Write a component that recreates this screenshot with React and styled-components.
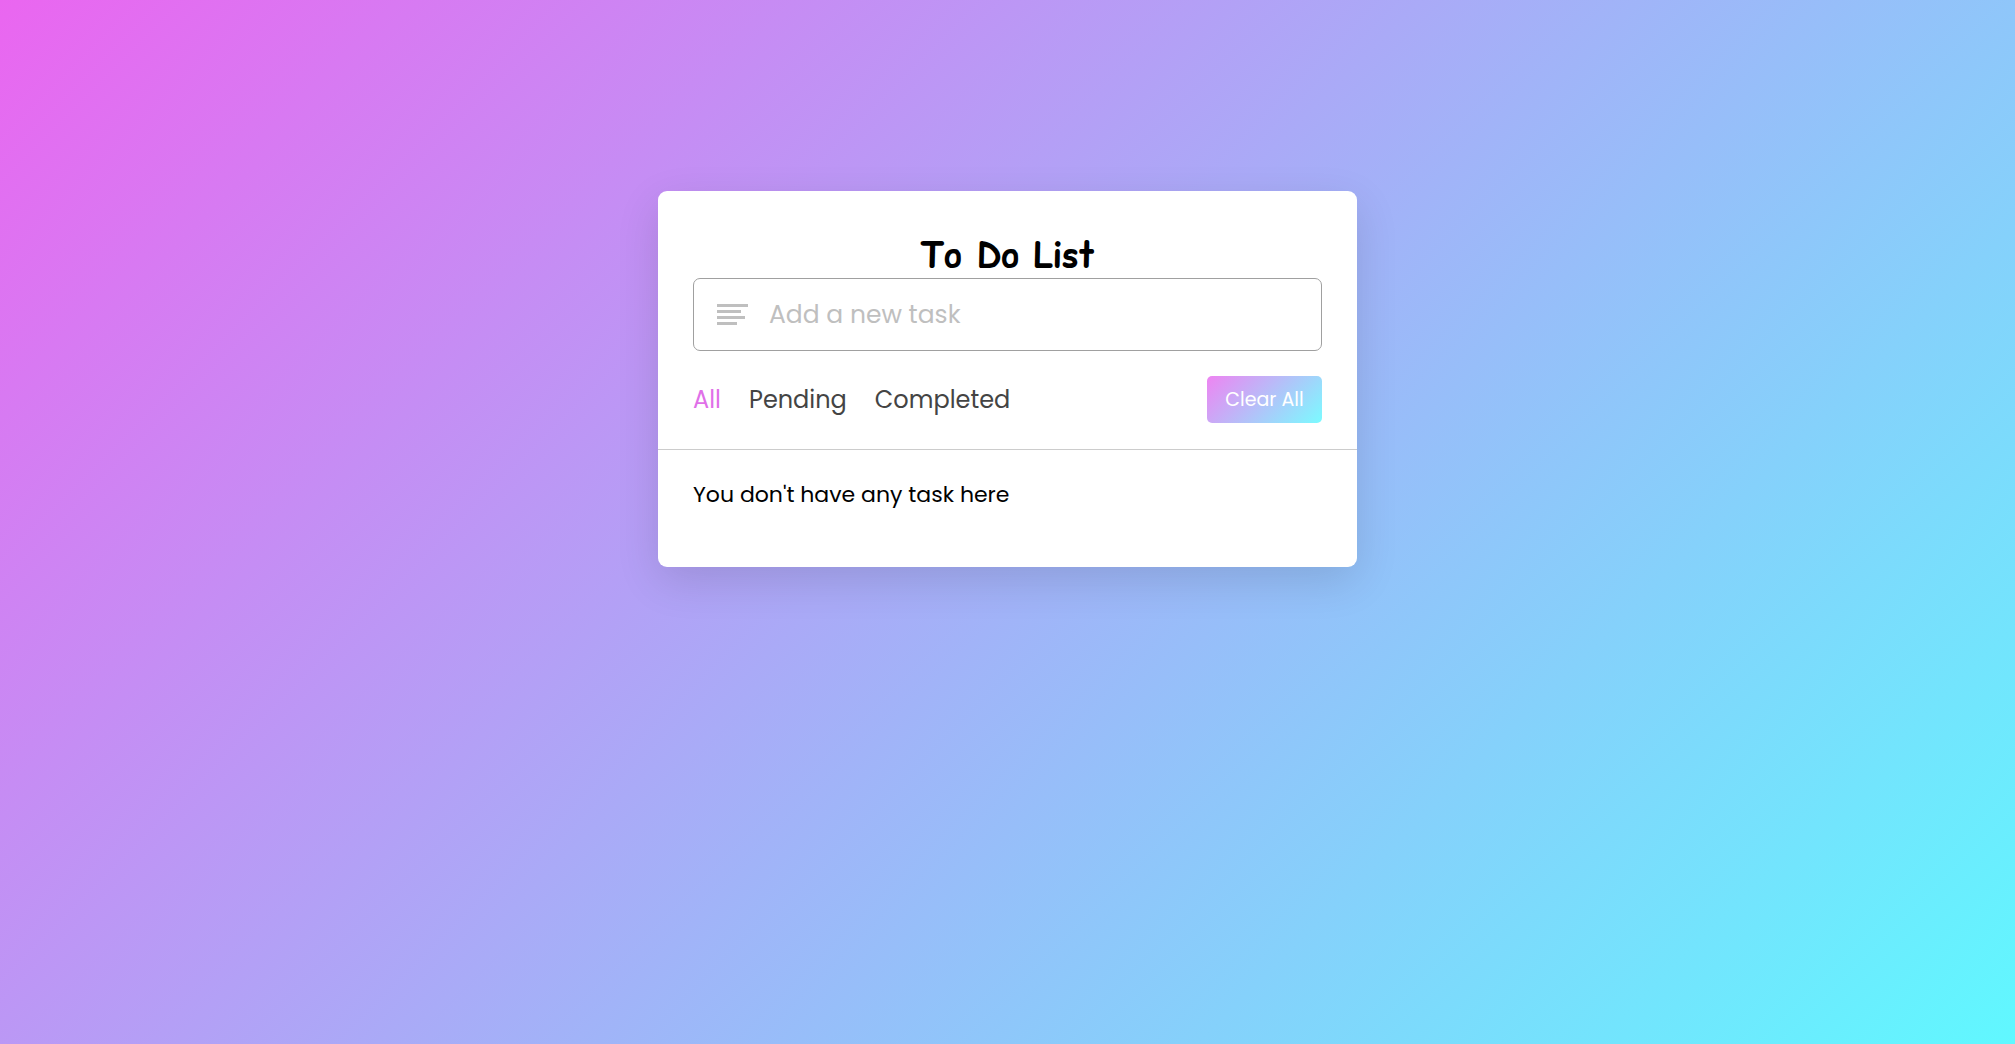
import React, { useState } from "react";
import styled, { createGlobalStyle } from "styled-components";

const GlobalStyle = createGlobalStyle`
  * { box-sizing: border-box; margin: 0; padding: 0; }
  body {
    min-height: 100vh;
    font-family: Poppins, Inter, "Noto Sans", sans-serif;
    background: linear-gradient(135deg, #ea66f0, #60f8ff) no-repeat fixed;
  }
`;

const Page = styled.main`
  display: flex;
  justify-content: center;
  align-items: flex-start;
  padding: 191px 20px 40px;
`;

const Card = styled.section`
  width: 100%;
  max-width: 699px;
  background: #fff;
  border-radius: 9px;
  box-shadow: 0 14px 44px rgba(0, 0, 0, 0.12);
`;

const Header = styled.header`
  padding: 41px 35px 26px;
  border-bottom: 1px solid #ccc;
`;

const Title = styled.h1`
  font: 700 34px/46px "Comic Relief", "Comic Sans MS", "Comic Neue", Lato, cursive;
  text-align: center;
`;

const Field = styled.label`
  display: flex;
  align-items: center;
  gap: 20px;
  height: 73px;
  padding: 0 23px;
  border: 1px solid #a0a0a0;
  border-radius: 7px;
`;

const TaskInput = styled.input`
  flex: 1;
  min-width: 0;
  height: 48px;
  border: 0;
  outline: 0;
  background: transparent;
  font: 400 25px/36px Poppins, Inter, "Noto Sans", sans-serif;
  &::placeholder { color: #bfbfbf; opacity: 1; }
`;

const Controls = styled.div`
  display: flex;
  align-items: center;
  justify-content: space-between;
  margin-top: 25px;
`;

const Filters = styled.nav`
  display: flex;
  gap: 28px;
`;

const Filter = styled.button`
  border: 0;
  background: none;
  color: ${(p) => (p.$active ? "#e070e8" : "#444")};
  font: 400 24px/38px Poppins, Inter, "Noto Sans", sans-serif;
  cursor: pointer;
`;

const ClearButton = styled.button`
  width: 115px;
  height: 47px;
  border: 0;
  border-radius: 5px;
  background: linear-gradient(135deg, #ee84f2, #7bfbff);
  color: #fff;
  font: 400 19px/26px Poppins, Inter, "Noto Sans", sans-serif;
  cursor: pointer;
`;

const TaskBox = styled.div`
  padding: 26px 35px 53px;
  font-size: 22px;
  line-height: 38px;
  color: #000;
`;

const BarsIcon = () => (
  <svg width="32" height="21" viewBox="0 0 32 21" fill="#bfbfbf" aria-hidden="true">
    <rect x="0" y="0" width="31" height="3" />
    <rect x="0" y="6" width="24" height="3" />
    <rect x="0" y="12" width="28" height="3" />
    <rect x="0" y="18" width="20" height="3" />
  </svg>
);

export default function App() {
  const [active, setActive] = useState("All");
  const [task, setTask] = useState("");
  return (
    <>
      <GlobalStyle />
      <Page>
        <Card>
          <Header>
            <Title>To Do List</Title>
            <Field>
              <BarsIcon />
              <TaskInput
                type="text"
                aria-label="Add a new task"
                placeholder="Add a new task"
                value={task}
                onChange={(e) => setTask(e.target.value)}
              />
            </Field>
            <Controls>
              <Filters>
                {["All", "Pending", "Completed"].map((name) => (
                  <Filter
                    key={name}
                    type="button"
                    $active={active === name}
                    onClick={() => setActive(name)}
                  >
                    {name}
                  </Filter>
                ))}
              </Filters>
              <ClearButton type="button" onClick={() => setTask("")}>Clear All</ClearButton>
            </Controls>
          </Header>
          <TaskBox>You don't have any task here</TaskBox>
        </Card>
      </Page>
    </>
  );
}
